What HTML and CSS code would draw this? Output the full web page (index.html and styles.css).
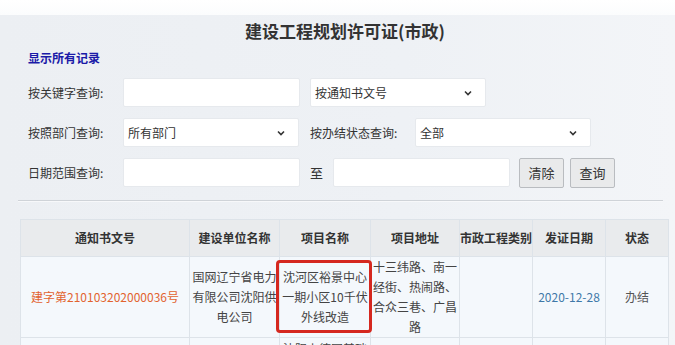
FILE: index.html
```html
<!DOCTYPE html>
<html lang="zh-CN">
<head>
    <meta charset="UTF-8">
    <meta name="viewport" content="width=device-width, initial-scale=1.0">
    <title>建设工程规划许可证(市政)</title>
    <link rel="stylesheet" href="styles.css">
</head>
<body>
    <div class="top-band"></div>

    <div class="page">
        <h1 class="title">建设工程规划许可证(市政)</h1>

        <div class="search">
            <a class="show-all" href="#">显示所有记录</a>

            <div class="search-row">
                <label class="label">按关键字查询:</label>
                <input class="field" type="text">
                <select class="field select">
                    <option>按通知书文号</option>
                </select>
            </div>

            <div class="search-row">
                <label class="label">按照部门查询:</label>
                <select class="field select">
                    <option>所有部门</option>
                </select>
                <label class="label label-status">按办结状态查询:</label>
                <select class="field select">
                    <option>全部</option>
                </select>
            </div>

            <div class="search-row">
                <label class="label">日期范围查询:</label>
                <input class="field" type="text">
                <span class="to">至</span>
                <input class="field" type="text">
                <button class="btn btn-clear">清除</button>
                <button class="btn">查询</button>
            </div>
        </div>

        <hr class="divider">

        <table class="result">
            <colgroup>
                <col style="width: 169px">
                <col style="width: 90px">
                <col style="width: 91px">
                <col style="width: 89px">
                <col style="width: 73px">
                <col style="width: 73px">
                <col style="width: 63px">
            </colgroup>
            <thead>
                <tr>
                    <th>通知书文号</th>
                    <th>建设单位名称</th>
                    <th>项目名称</th>
                    <th>项目地址</th>
                    <th>市政工程类别</th>
                    <th>发证日期</th>
                    <th>状态</th>
                </tr>
            </thead>
            <tbody>
                <tr>
                    <td><a class="doc-no" href="#">建字第210103202000036号</a></td>
                    <td>国网辽宁省电力有限公司沈阳供电公司</td>
                    <td class="marked">沈河区裕景中心一期小区10千伏外线改造<span class="mark-box"></span></td>
                    <td>十三纬路、南一经街、热闹路、合众三巷、广昌路</td>
                    <td></td>
                    <td class="date">2020-12-28</td>
                    <td class="status">办结</td>
                </tr>
                <tr>
                    <td></td>
                    <td></td>
                    <td class="top">沈阳上德国基础</td>
                    <td></td>
                    <td></td>
                    <td></td>
                    <td></td>
                </tr>
            </tbody>
        </table>
    </div>
</body>
</html>
```

FILE: styles.css
```css
body {
    margin: 0;
    font-family: "Noto Sans CJK SC", "Noto Sans", sans-serif;
    font-size: 12px;
    color: #333;
    background: linear-gradient(to right, #eceff3, #eef1f5 60%, #f3f5f8);
    overflow: hidden;
}
.top-band {
    height: 15px;
    background: linear-gradient(to bottom, #ffffff, #fbfcfd);
}
.page {
    margin-left: 18px;
    width: 650px;
}
.title {
    margin: 0;
    height: 32px;
    line-height: 32px;
    text-align: center;
    font-size: 17px;
    font-weight: bold;
    color: #333;
    padding-left: 4px;
}
.search {
    padding-left: 10px;
}
.show-all {
    display: block;
    height: 22px;
    line-height: 22px;
    font-weight: bold;
    color: #1a1aa8;
    text-decoration: none;
    margin-bottom: 9px;
}
.search-row {
    display: flex;
    align-items: center;
    height: 29px;
    margin-bottom: 11px;
}
.label {
    width: 95px;
    flex: none;
}
.label-status {
    width: 105px;
}
.field {
    box-sizing: border-box;
    width: 177px;
    height: 29px;
    margin: 0 10px 0 0;
    padding: 0 4px;
    border: 1px solid #e6e9ed;
    border-radius: 2px;
    background: #fff;
    font-family: inherit;
    font-size: 12px;
    color: #333;
    outline: none;
}
.select {
    width: 176px;
    margin-right: 11px;
    appearance: none;
    padding-right: 20px;
    background: #fff url("data:image/svg+xml;utf8,<svg xmlns='http://www.w3.org/2000/svg' width='10' height='10'><path d='M2 3.5 L5 6.5 L8 3.5' fill='none' stroke='%23333' stroke-width='1.6'/></svg>") no-repeat right 12px center;
}
.to {
    width: 23px;
    flex: none;
    font-size: 13px;
}
.btn {
    box-sizing: border-box;
    height: 30px;
    width: 45px;
    margin-left: -1px;
    margin-right: 7px;
    border: 1px solid #b9bcc0;
    border-radius: 2px;
    background: #e9eaeb;
    font-family: inherit;
    font-size: 13px;
    color: #333;
    cursor: pointer;
}
.divider {
    margin: 13px 0 0 0;
    width: 645px;
    border: none;
    border-top: 1px solid #cfd3d8;
    border-bottom: 1px solid #f7f8fa;
}
.result {
    margin: 17px 0 0 2px;
    table-layout: fixed;
    width: 648px;
    border-collapse: collapse;
    background: #f4f8fc;
}
.result th,
.result td {
    border: 1px solid #dde3e9;
    text-align: center;
    line-height: 20px;
    padding: 0 2px;
    word-break: break-all;
}
.result th {
    height: 36px;
    padding: 0;
    white-space: nowrap;
    background: #e9ebed;
    font-weight: bold;
    color: #333;
}
.result td {
    color: #444;
    vertical-align: middle;
}
.result td.top {
    vertical-align: top;
    padding-top: 1px;
}
.result .doc-no {
    color: #e2632f;
    text-decoration: none;
}
.result .date {
    color: #3f78a8;
}
.result .status {
    color: #555;
}
.marked {
    position: relative;
}
.mark-box {
    position: absolute;
    left: -4px;
    right: -2px;
    top: 3px;
    bottom: 4px;
    border: 3px solid #d5281f;
    border-radius: 4px;
}
```
